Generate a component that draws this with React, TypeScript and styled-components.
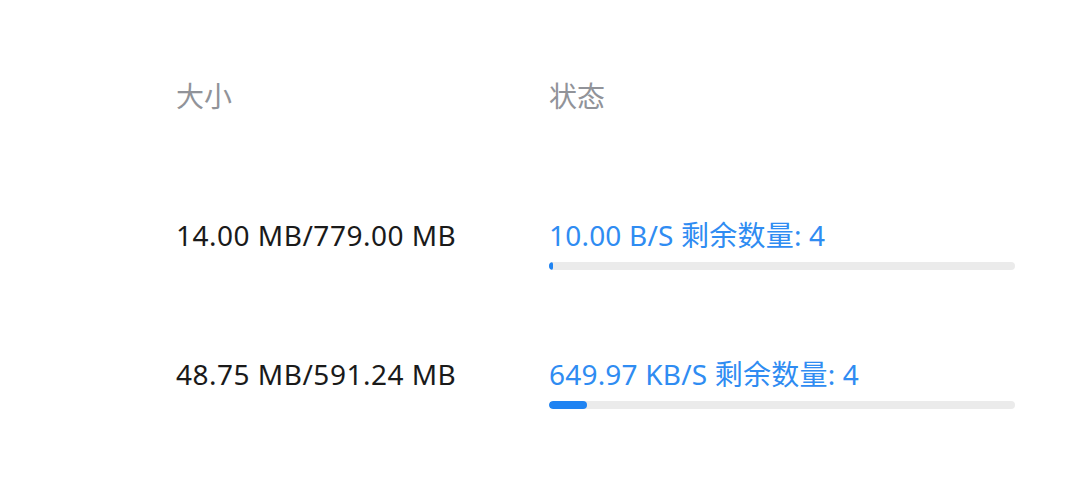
import React from 'react'
import styled, { createGlobalStyle } from 'styled-components'

const GlobalStyle = createGlobalStyle`
  body {
    margin: 0;
    background: #fff;
    font-family: "Noto Sans", "Noto Sans CJK SC", sans-serif;
  }
`

const Table = styled.div`
  padding: 78px 0 0 176px;
`

const Row = styled.div<{ head?: boolean }>`
  display: grid;
  grid-template-columns: 373px 466px;
  align-items: start;
  padding: ${({ head }) => (head ? '0 0 60px' : '44px 0 43px')};
`

const HeadCell = styled.div`
  font-size: 28px;
  line-height: 36px;
  color: #919399;
`

const SizeCell = styled.div`
  font-size: 28px;
  line-height: 34px;
  letter-spacing: 0.5px;
  color: #1a1a1a;
`

const StatusText = styled.div`
  font-size: 28px;
  line-height: 34px;
  letter-spacing: 0.2px;
  color: #2f8cf2;
`

const Track = styled.div`
  margin-top: 10px;
  height: 8px;
  border-radius: 4px;
  background: #ebebeb;
  overflow: hidden;
`

const Fill = styled.div`
  height: 100%;
  border-radius: 4px;
  background: #1f83f2;
`

const rows = [
  { size: '14.00 MB/779.00 MB', speed: '10.00 B/S', left: 4, pct: 0.9 },
  { size: '48.75 MB/591.24 MB', speed: '649.97 KB/S', left: 4, pct: 8.2 }
]

const App = () => {
  return (
    <>
      <GlobalStyle />
      <Table>
        <Row head>
          <HeadCell>大小</HeadCell>
          <HeadCell>状态</HeadCell>
        </Row>
        {rows.map((r) => (
          <Row key={r.size}>
            <SizeCell>{r.size}</SizeCell>
            <div>
              <StatusText>{r.speed} 剩余数量: {r.left}</StatusText>
              <Track>
                <Fill style={{ width: `${r.pct}%` }} />
              </Track>
            </div>
          </Row>
        ))}
      </Table>
    </>
  )
}

export default App
